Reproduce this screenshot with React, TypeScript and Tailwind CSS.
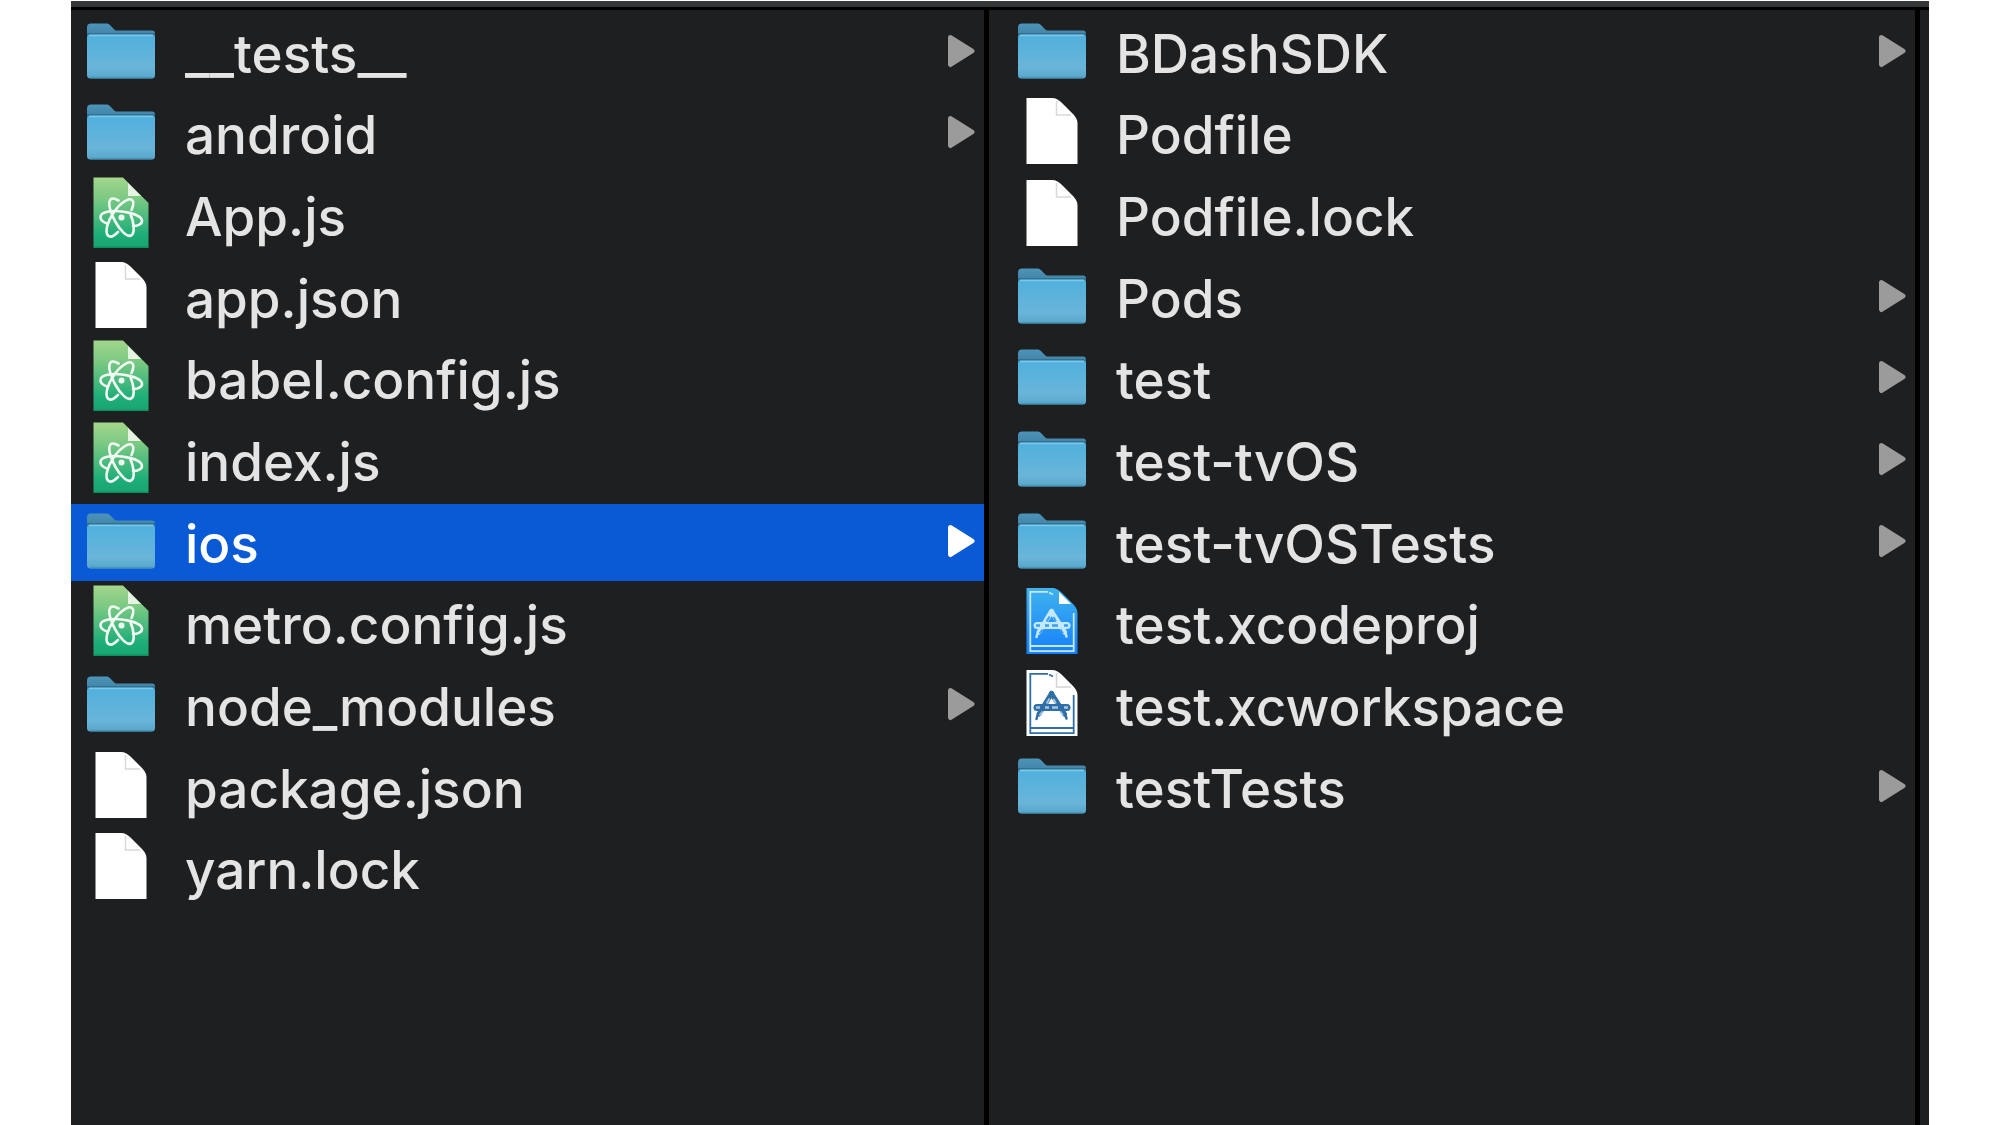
import React from "react";

type Kind = "folder" | "atom" | "file" | "project" | "workspace";
type Entry = { name: string; kind: Kind };

const rootEntries: Entry[] = [
  { name: "__tests__", kind: "folder" },
  { name: "android", kind: "folder" },
  { name: "App.js", kind: "atom" },
  { name: "app.json", kind: "file" },
  { name: "babel.config.js", kind: "atom" },
  { name: "index.js", kind: "atom" },
  { name: "ios", kind: "folder" },
  { name: "metro.config.js", kind: "atom" },
  { name: "node_modules", kind: "folder" },
  { name: "package.json", kind: "file" },
  { name: "yarn.lock", kind: "file" },
];

const iosEntries: Entry[] = [
  { name: "BDashSDK", kind: "folder" },
  { name: "Podfile", kind: "file" },
  { name: "Podfile.lock", kind: "file" },
  { name: "Pods", kind: "folder" },
  { name: "test", kind: "folder" },
  { name: "test-tvOS", kind: "folder" },
  { name: "test-tvOSTests", kind: "folder" },
  { name: "test.xcodeproj", kind: "project" },
  { name: "test.xcworkspace", kind: "workspace" },
  { name: "testTests", kind: "folder" },
];

const PAGE = "M8.5 3H34c4 0 7 2 10 5l9 9c4 4 6.5 7 6.5 11v41h-51z";

function Gradients() {
  return (
    <svg className="absolute size-0" aria-hidden="true">
      <defs>
        <linearGradient id="folderFront" x1="0" y1="0" x2="0" y2="1">
          <stop offset="0" stopColor="#4fb0dd" />
          <stop offset="0.75" stopColor="#69b5da" />
          <stop offset="1" stopColor="#58a6cc" />
        </linearGradient>
        <linearGradient id="folderBack" x1="0" y1="0" x2="0" y2="1">
          <stop offset="0" stopColor="#4c94ba" />
          <stop offset="1" stopColor="#3b7897" />
        </linearGradient>
        <linearGradient id="atomPage" x1="0" y1="0" x2="0" y2="1">
          <stop offset="0" stopColor="#a3d68b" />
          <stop offset="0.3" stopColor="#7bc983" />
          <stop offset="0.8" stopColor="#1fae78" />
          <stop offset="1" stopColor="#17a672" />
        </linearGradient>
        <linearGradient id="projectPage" x1="0" y1="0" x2="0" y2="1">
          <stop offset="0" stopColor="#3fb2ee" />
          <stop offset="1" stopColor="#1680fb" />
        </linearGradient>
      </defs>
    </svg>
  );
}

function FolderArt() {
  return (
    <>
      <path
        d="M0 13.5a4 4 0 0 1 4-4h15c2 0 3 .5 4.2 1.8l3.800 4c1 1 1.500 1.200 3 1.200h35a3 3 0 0 1 3 3V30H0z"
        fill="url(#folderBack)"
      />
      <path d="M0 19h68v4H0z" fill="#35718f" />
      <rect x="0" y="20.5" width="68" height="44" rx="3.5" fill="url(#folderFront)" />
      <path d="M2 21.5h64" stroke="#7cc8ea" strokeWidth="1.5" />
      <path d="M2.5 63.5h63" stroke="#4796bd" strokeWidth="1.5" />
    </>
  );
}

function FileArt() {
  return (
    <>
      <path d={PAGE} fill="#fff" />
      <path d="M38.5 6v14H53" fill="none" stroke="#d9d9d9" strokeWidth="1.5" />
    </>
  );
}

function AtomArt() {
  return (
    <>
      <path d="M6.5.5H36L61.5 26v45h-55z" fill="url(#atomPage)" />
      <path d="M7 70.2h54" stroke="#0f8f60" strokeWidth="1.5" />
      <path d="M41 6v13h13z" fill="#e6f3e3" />
      <g fill="none" stroke="#f1fbf3" strokeWidth="2.6" strokeLinecap="round">
        <path d="M20 46.5C16 45 13 43 13.5 39.5 14 35 24 33 35 34.5s20 5 20 9.5c0 3-4 5-9 5" />
        <path d="M31 55c-4 4-8 5.5-10 3.5-3.5-3.5-.5-14 6-23.5S42 20.5 45 23c2 1.5 1.5 5.5-.5 10" />
        <path d="M31.5 23.5C28 21.5 25 21 23.5 22.500c-3 3.500 0 13.500 5 22.500s12 15.500 15.500 13.500c4-2 3.500-12-1-22.500" />
      </g>
      <circle cx="34.5" cy="40.5" r="3" fill="#f1fbf3" />
    </>
  );
}

function XcodeArt({ page, gap, ink, fold }: { page: string; gap: string; ink: string; fold: React.ReactNode }) {
  return (
    <>
      <path d={PAGE} fill={page} />
      {fold}
      <g fill="none" stroke={ink} strokeWidth="1.8">
        <path d="M30 6.8H12.3v59.4h43.400V28" />
        <path d="M12.3 61h43.4" />
        <path d="M31 7.5l4 2" />
      </g>
      <g fill="none" stroke={ink} strokeLinecap="round">
        <path d="M33.5 26.5L21 47" strokeWidth="5" />
        <path d="M33.5 26.5L46.5 47" strokeWidth="5" />
        <path d="M19 40.5h30" strokeWidth="7" />
        <path d="M19.5 48.5L18.5 52M47.5 48.5l1 3" strokeWidth="2.5" />
      </g>
      <g fill="none" stroke={gap} strokeWidth="1.8">
        <path d="M31.5 31.5l-3 5M35.5 32l2.5 4.500M24.5 44.500l-3 4M42.500 44.500l2.500 4" />
        <path d="M18 40.5h4M27 40.5h4M34 40.5h6M46 40.5h4" strokeWidth="2.4" />
      </g>
    </>
  );
}

function EntryIcon({ kind }: { kind: Kind }) {
  return (
    <svg viewBox="0 0 68 78" className="h-[78px] w-[68px] shrink-0" aria-hidden="true">
      {kind === "folder" && <FolderArt />}
      {kind === "file" && <FileArt />}
      {kind === "atom" && <AtomArt />}
      {kind === "project" && (
        <XcodeArt
          page="url(#projectPage)"
          gap="#3a9df4"
          ink="#c4e8ff"
          fold={<path d="M41 7v12h12z" fill="#fff" />}
        />
      )}
      {kind === "workspace" && (
        <XcodeArt
          page="#ffffff"
          gap="#a9c6de"
          ink="#2f6fa8"
          fold={<path d="M38.5 6v14H53" fill="none" stroke="#d4d4d4" strokeWidth="1.5" />}
        />
      )}
    </svg>
  );
}

function Disclosure() {
  return (
    <svg viewBox="0 0 28 36" className="mb-1 h-9 w-7 shrink-0" aria-hidden="true">
      <path
        d="M3.5 4.5L25 18 3.500 31.500z"
        fill="currentColor"
        stroke="currentColor"
        strokeWidth="5"
        strokeLinejoin="round"
      />
    </svg>
  );
}

function Column({
  label,
  entries,
  selected,
  inset,
}: {
  label: string;
  entries: Entry[];
  selected?: string;
  inset: string;
}) {
  return (
    <section aria-label={label} className="border-r-[5px] border-black pt-0.5">
      <ul className="grid min-h-[898px] grid-rows-11">
        {entries.map((entry) => {
          const active = entry.name === selected;
          return (
            <li key={entry.name} className="flex items-center">
              <button
                type="button"
                aria-pressed={active}
                className={`flex h-[77px] w-full items-center pr-[9px] text-left ${inset} ${
                  active ? "bg-[#0a5ad5] text-white" : "text-[#e4e4e4]"
                }`}
              >
                <EntryIcon kind={entry.kind} />
                <span className="ml-[30px] flex-1 pt-0.5 text-[53px] leading-[72px] font-medium whitespace-nowrap">
                  {entry.name}
                </span>
                {entry.kind === "folder" && (
                  <span className={active ? "text-white" : "text-[#9b9b9b]"}>
                    <Disclosure />
                  </span>
                )}
              </button>
            </li>
          );
        })}
      </ul>
    </section>
  );
}

export default function App() {
  return (
    <div className="min-h-screen bg-white px-[71px] pt-px font-['Inter',sans-serif]">
      <Gradients />
      <main className="grid min-h-[calc(100vh-1px)] grid-cols-[918fr_931fr_9px] grid-rows-[3px_1fr] border-t-[6px] border-[#353839] bg-[#1e1f21]">
        <div className="col-span-3 bg-black" />
        <Column label="Project" entries={rootEntries} selected="ios" inset="pl-4" />
        <Column label="ios" entries={iosEntries} inset="pl-[29px]" />
      </main>
    </div>
  );
}
